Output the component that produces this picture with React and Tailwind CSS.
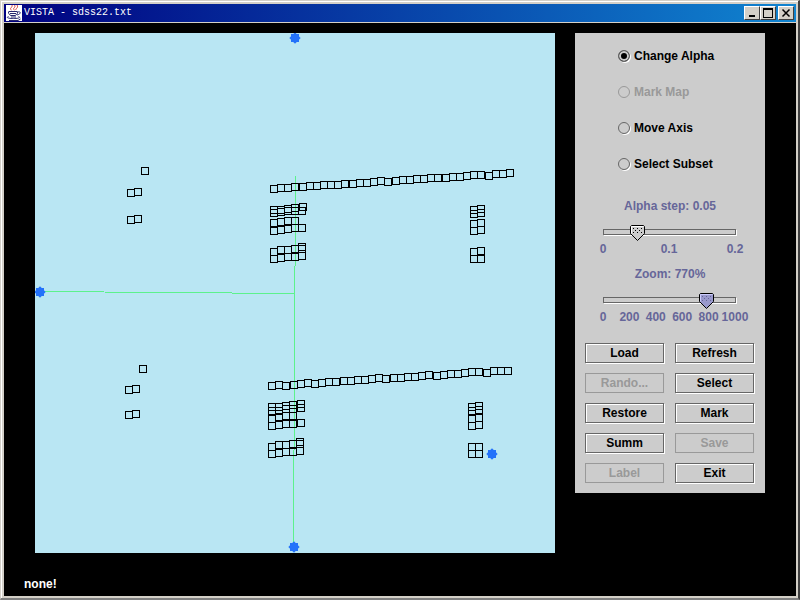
import React, { useState } from "react";

// Every point is the top left corner of an 8px marker
const upperCurve = [
  [270, 185], [277, 184], [284, 184], [291, 183], [299, 183], [306, 182], [313, 182],
  [320, 181], [327, 181], [334, 181], [341, 180], [349, 180], [356, 179], [363, 179],
  [370, 178], [377, 177], [384, 178], [392, 177], [399, 176], [406, 176], [413, 175],
  [420, 175], [427, 174], [434, 174], [442, 174], [449, 173], [456, 173], [463, 172],
  [470, 171], [477, 171], [485, 172], [492, 170], [499, 170], [506, 169],
];

const lowerCurve = [
  [268, 382], [275, 381], [282, 382], [290, 381], [297, 380], [304, 379], [311, 380],
  [318, 379], [325, 378], [332, 378], [340, 377], [347, 377], [354, 376], [361, 376],
  [368, 375], [375, 374], [382, 375], [390, 374], [397, 374], [404, 373], [411, 373],
  [418, 372], [425, 371], [433, 372], [440, 371], [447, 370], [454, 370], [461, 369],
  [468, 368], [475, 368], [483, 369], [490, 367], [497, 367], [504, 367],
];

const upperClusters = [
  [270, 206], [277, 206], [284, 205], [291, 204], [299, 203],
  [270, 209], [277, 208], [284, 207], [291, 207], [298, 207],
  [270, 219], [277, 218], [284, 217], [291, 217],
  [270, 227], [277, 226], [284, 225], [291, 224], [298, 224],
  [270, 248], [277, 246], [284, 246], [291, 245], [298, 243], [298, 245],
  [270, 255], [277, 254], [284, 253], [291, 253], [298, 252],
  [470, 206], [477, 205], [470, 210], [477, 209],
  [470, 220], [477, 219], [470, 227], [477, 226],
  [470, 248], [477, 247], [470, 255], [477, 255],
];

const lowerClusters = [
  [268, 403], [275, 403], [282, 402], [289, 401], [297, 400],
  [268, 407], [275, 407], [282, 405], [289, 405], [297, 404],
  [268, 415], [275, 413], [282, 412], [289, 412],
  [268, 422], [275, 421], [282, 420], [289, 420], [297, 419],
  [268, 443], [275, 441], [282, 441], [289, 440], [296, 438], [296, 440],
  [268, 450], [275, 449], [282, 448], [289, 448], [296, 447],
  [468, 403], [475, 402], [468, 407], [475, 406],
  [468, 415], [475, 414], [468, 422], [475, 421],
  [468, 443], [475, 443], [468, 450], [475, 450],
];

const outliers = [
  [141, 167], [127, 189], [134, 188], [127, 216], [134, 215],
  [139, 365], [125, 386], [132, 385], [125, 411], [132, 410],
];

const points = [...upperCurve, ...lowerCurve, ...upperClusters, ...lowerClusters, ...outliers];

const axisHandles = [[295, 38], [40, 292], [294, 547], [492, 454]];

const modes = [
  { id: "alpha", label: "Change Alpha" },
  { id: "map", label: "Mark Map", disabled: true },
  { id: "axis", label: "Move Axis" },
  { id: "subset", label: "Select Subset" },
];

const actions = [
  { label: "Load" },
  { label: "Refresh" },
  { label: "Rando...", disabled: true },
  { label: "Select" },
  { label: "Restore" },
  { label: "Mark" },
  { label: "Summ" },
  { label: "Save", disabled: true },
  { label: "Label", disabled: true },
  { label: "Exit" },
];

const winButton =
  "flex h-[14px] w-4 items-center justify-center bg-[#d4d0c8] border border-t-white border-l-white border-r-[#404040] border-b-[#404040]";

const JavaIcon = () => (
  <svg width="16" height="16" viewBox="0 0 16 16" className="bg-white" fill="none">
    <path d="M5.500 5c-3-1.500 1.500-2.500 .5-5M8.500 5c-3-1.500 2-2.500 0-5M10 5c-1-1.500 3-2 1-5" stroke="#d8403c" />
    <path d="M2.500 6.500h9M2.500 7c0 2 1 3 2.500 3.500h4c1.500-.5 2.500-1.500 2.500-3.500M11.500 7c3.500-1 4 2-.5 3" stroke="#26266e" />
    <path d="M4 8.500h6M2.500 11.500c-3 1 0 2 5 2s8-1 5-2M5 12h5M3 15.500h9l2.500-1.500" stroke="#26266e" />
  </svg>
);

const TitleBar = () => (
  <header className="flex h-[18px] items-center bg-linear-to-r/srgb from-[#000080] to-[#1084d0] px-0.5">
    <JavaIcon />
    <h1 className="ml-0.5 flex-1 font-['Liberation_Mono',monospace] text-[10px] leading-4 font-normal text-white">
      VISTA - sdss22.txt
    </h1>
    <button aria-label="Minimize" className={winButton}>
      <svg width="10" height="10" viewBox="0 0 10 10">
        <path d="M2 7h6v2H2z" />
      </svg>
    </button>
    <button aria-label="Maximize" className={winButton}>
      <svg width="10" height="10" viewBox="0 0 10 10">
        <path d="M0 0h10v10H0zM1 2v7h8V2z" fillRule="evenodd" />
      </svg>
    </button>
    <button aria-label="Close" className={`${winButton} ml-0.5`}>
      <svg width="10" height="10" viewBox="0 0 10 10" stroke="black" strokeWidth="1.5">
        <path d="M1.500 1.500l7 7M8.500 1.500l-7 7" />
      </svg>
    </button>
  </header>
);

const Plot = () => (
  <svg
    viewBox="35 33 520 520"
    role="img"
    aria-label="Scatter plot"
    className="aspect-square min-w-0 flex-1 bg-[#b9e6f3]"
  >
    <g stroke="#5cf28c" fill="none" shapeRendering="crispEdges">
      <path d="M40 291.500L295 293.500" />
      <path d="M295.500 176L293.500 547" />
    </g>
    <g stroke="black" fill="none" shapeRendering="crispEdges">
      {points.map(([x, y], i) => (
        <rect key={i} x={x + 0.5} y={y + 0.5} width="7" height="7" />
      ))}
    </g>
    {axisHandles.map(([x, y]) => (
      <g key={`${x}-${y}`} fill="#2472fa">
        <rect x={x - 4} y={y - 4} width="8" height="8" />
        <rect x={x - 4} y={y - 4} width="8" height="8" transform={`rotate(45 ${x} ${y})`} />
      </g>
    ))}
  </svg>
);

const Slider = ({ id, label, value, max, step, ticks, onChange, active }) => (
  <div className="px-7 text-[#666699]">
    <label htmlFor={id} className="block text-center">
      {label}
    </label>
    <div className="relative mt-[11px] h-4 pt-1">
      <div className="mr-px h-1.5 border border-[#666] shadow-[1px_1px_0_#fff]" />
      <svg
        width="15"
        height="16"
        viewBox="0 0 15 16"
        className="absolute top-0"
        style={{ left: Math.round((value / max) * 133) - 6 }}
      >
        <path d="M.5 1.500l1-1h12l1 1V8.500l-7 7-7-7z" fill={active ? "#9999cc" : "#ccc"} stroke="black" />
        <path d="M1.500 8.500v-7h12" stroke={active ? "#ccccff" : "white"} fill="none" />
        <path
          d="M3 3h1v1H3zM7 3h1v1H7zM11 3h1v1h-1zM5 5h1v1H5zM9 5h1v1H9zM3 7h1v1H3zM7 7h1v1H7zM11 7h1v1h-1z"
          fill={active ? "#666699" : "black"}
        />
      </svg>
      <input
        id={id}
        type="range"
        min="0"
        max={max}
        step={step}
        value={value}
        onChange={(e) => onChange(Number(e.target.value))}
        className="absolute inset-0 h-4 w-full opacity-0"
      />
    </div>
    <div className="mr-0.5 flex justify-between">
      {ticks.map((tick) => (
        <span key={tick} className="flex w-0 justify-center">
          {tick}
        </span>
      ))}
    </div>
  </div>
);

const ControlPanel = () => {
  const [mode, setMode] = useState("alpha");
  const [alpha, setAlpha] = useState(0.05);
  const [zoom, setZoom] = useState(770);

  return (
    <aside className="w-[190px] shrink-0 bg-[#ccc] pt-[5px] pb-2.5">
      <fieldset className="pl-[43px]">
        {modes.map(({ id, label, disabled }) => (
          <label key={id} className={`flex h-9 items-center gap-1 ${disabled ? "text-[#999]" : ""}`}>
            <input
              type="radio"
              name="mode"
              checked={mode === id}
              disabled={disabled}
              onChange={() => setMode(id)}
              className="h-3 w-3 appearance-none rounded-full border border-[#666] shadow-[1px_1px_0_#fff] checked:bg-black checked:shadow-[1px_1px_0_#fff,inset_0_0_0_2px_#ccc] disabled:border-[#999] disabled:shadow-none"
            />
            {label}
          </label>
        ))}
      </fieldset>

      <div className="mt-4 space-y-[9px]">
        <Slider
          id="alpha-step"
          label={`Alpha step: ${alpha}`}
          value={alpha}
          max={0.2}
          step={0.01}
          ticks={["0", "0.1", "0.2"]}
          onChange={setAlpha}
        />
        <Slider
          id="zoom"
          label={`Zoom: ${zoom}%`}
          value={zoom}
          max={1000}
          step={10}
          ticks={["0", "200", "400", "600", "800", "1000"]}
          onChange={setZoom}
          active
        />
      </div>

      <div className="mt-[18px] grid grid-cols-2 gap-2.5 px-2.5">
        {actions.map(({ label, disabled }) => (
          <button
            key={label}
            disabled={disabled}
            className="mr-px h-5 border border-[#666] shadow-[inset_1px_1px_0_#fff,1px_1px_0_#fff] disabled:border-[#999] disabled:text-[#999] disabled:shadow-none"
          >
            {label}
          </button>
        ))}
      </div>
    </aside>
  );
};

export default function App() {
  return (
    <div className="flex min-h-screen flex-col border border-r-2 border-b-2 border-t-[#d4d0c8] border-r-[#404040] border-b-[#808080] border-l-[#d4d0c8] bg-[#d4d0c8] font-['Liberation_Sans',Arial,sans-serif] text-xs leading-4 font-bold">
      <div className="flex flex-1 flex-col border-t border-l border-white p-0.5">
        <TitleBar />
        <main className="mt-px flex flex-1 flex-col justify-between bg-black pt-2.5 pb-1">
          <div className="flex items-start gap-5 px-[31px]">
            <Plot />
            <ControlPanel />
          </div>
          <p className="pl-5 text-white">none!</p>
        </main>
      </div>
    </div>
  );
}
